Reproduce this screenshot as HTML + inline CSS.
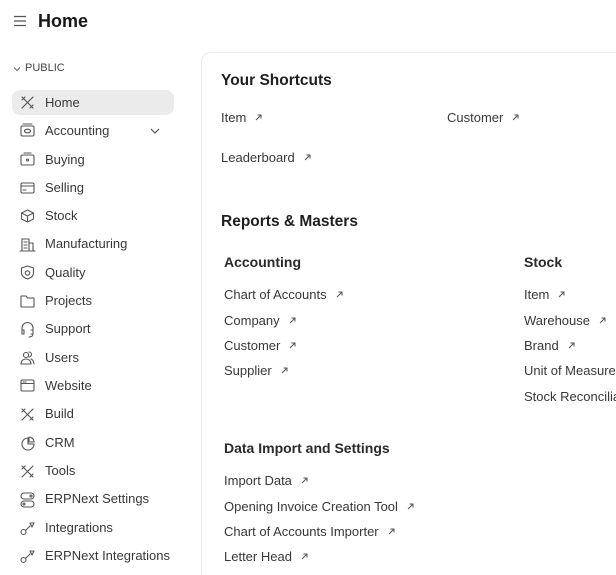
<!DOCTYPE html>
<html style="height:575px;overflow:hidden"><head><meta charset="utf-8"><style>
*{margin:0;padding:0;box-sizing:border-box}
body{width:616px;height:575px;overflow:hidden;background:#fff;font-family:"Liberation Sans",sans-serif;color:#383838;position:relative}
.a{position:absolute;white-space:nowrap}
.t{font-size:13px;line-height:16px}
.h{font-weight:bold;color:#1f1f1f}
.ar{display:inline-block;width:7px;height:7px;margin-left:9px;vertical-align:1px}
</style></head><body>
<svg class="a" style="left:13px;top:14px" width="14" height="14" viewBox="0 0 14 14" stroke="#555" stroke-width="1.2"><path d="M1 2.5h12M1 7h12M1 11.5h12"/></svg>
<div class="a h" style="left:38px;top:10px;font-size:18px;line-height:22px;color:#171717">Home</div>
<svg class="a" style="left:13px;top:66px" width="8" height="6" viewBox="0 0 8 6" fill="none" stroke="#666"><path d="M1 1.5l3 3 3-3"/></svg>
<div class="a" style="left:25px;top:62px;font-size:11px;line-height:13px;color:#444">PUBLIC</div>
<div class="a" style="left:12px;top:90px;width:162px;height:25px;background:#ebebeb;border-radius:8px"></div>
<svg class="a" style="left:149px;top:127px" width="12" height="8" viewBox="0 0 12 8" fill="none" stroke="#555" stroke-width="1.2"><path d="M2 2l4 4 4-4"/></svg>

<div class="a t" style="left:45px;top:95px">Home</div>
<div class="a t" style="left:45px;top:123px">Accounting</div>
<div class="a t" style="left:45px;top:152px">Buying</div>
<div class="a t" style="left:45px;top:180px">Selling</div>
<div class="a t" style="left:45px;top:208px">Stock</div>
<div class="a t" style="left:45px;top:236px">Manufacturing</div>
<div class="a t" style="left:45px;top:265px">Quality</div>
<div class="a t" style="left:45px;top:293px">Projects</div>
<div class="a t" style="left:45px;top:321px">Support</div>
<div class="a t" style="left:45px;top:350px">Users</div>
<div class="a t" style="left:45px;top:378px">Website</div>
<div class="a t" style="left:45px;top:406px">Build</div>
<div class="a t" style="left:45px;top:435px">CRM</div>
<div class="a t" style="left:45px;top:463px">Tools</div>
<div class="a t" style="left:45px;top:491px">ERPNext Settings</div>
<div class="a t" style="left:45px;top:520px">Integrations</div>
<div class="a t" style="left:45px;top:548px">ERPNext Integrations</div>

<svg class="a" style="left:0;top:0" width="40" height="575" fill="none" stroke="#555" stroke-width="1.1" stroke-linecap="round" stroke-linejoin="round">
<path d="M22 97l11 11M33 97l-11 11M22 100l3-3M30 108l3-3"/>
<rect x="21" y="126" width="13" height="10" rx="1.5"/><path d="M23 124h9"/><ellipse cx="27.5" cy="131" rx="3" ry="1.8"/>
<rect x="21" y="155" width="13" height="10" rx="1.5"/><path d="M24 153h7"/><circle cx="27.5" cy="160" r="1"/>
<rect x="21" y="183" width="13" height="10" rx="1.5"/><path d="M21 186h13M23 190h3"/>
<path d="M27.5 210l6 3v6l-6 3-6-3v-6zM21.5 213l6 3 6-3M27.5 216v6"/>
<path d="M22 251v-12h7v12M29 243h4v8M20 251h15M24 242h1M26 242h1M24 245h1M26 245h1M24 248h1M26 248h1"/>
<path d="M27.5 266l6 2v5c0 3-3 5-6 6-3-1-6-3-6-6v-5z"/><circle cx="27.5" cy="273" r="2.2"/>
<path d="M21 296h5l1.5 2H34v9H21z"/>
<path d="M22 330v-2a5.5 5.5 0 0 1 11 0v2M22 330h2v4h-2zM31 330h2v4h-2M33 334c0 2-2 3-4 3"/>
<circle cx="26" cy="355" r="2.5"/><path d="M21 364c0-3 2-5 5-5s5 2 5 5zM29 352a2.5 2.5 0 0 1 0 5M31 359c2 1 3 3 3 5"/>
<rect x="21" y="380" width="13" height="11" rx="1.5"/><path d="M21 383.5h13M23 382h1M25 382h1"/>
<path d="M22 409l11 11M33 409l-11 11M22 412l3-3M30 420l3-3"/>
<path d="M28 438a6 6 0 1 0 6 6h-6zM29 437v5h5a5 5 0 0 0-5-5z"/>
<path d="M22 466l11 11M33 466l-11 11M22 469l3-3M30 477l3-3"/>
<rect x="21" y="493" width="13" height="6" rx="3"/><rect x="21" y="501" width="13" height="6" rx="3"/><circle cx="31" cy="496" r="1"/><circle cx="24" cy="504" r="1"/>
<circle cx="23.5" cy="532" r="2.5"/><path d="M26 530l4-4M30 523l4 0-2 4z"/>
<circle cx="23.5" cy="560" r="2.5"/><path d="M26 558l4-4M30 551l4 0-2 4z"/>
</svg>

<div class="a" style="left:201px;top:52px;width:430px;height:540px;border:1px solid #ececec;border-radius:10px"></div>
<div class="a h" style="left:221px;top:72px;font-size:15.5px;line-height:18px">Your Shortcuts</div>
<div class="a t" style="left:221px;top:110px">Item<svg class="ar" viewBox="0 0 7 7" fill="none" stroke="#555"><path d="M1 6l5-5M2.5 1H6v3.5"/></svg></div>
<div class="a t" style="left:447px;top:110px">Customer<svg class="ar" viewBox="0 0 7 7" fill="none" stroke="#555"><path d="M1 6l5-5M2.5 1H6v3.5"/></svg></div>
<div class="a t" style="left:221px;top:150px">Leaderboard<svg class="ar" viewBox="0 0 7 7" fill="none" stroke="#555"><path d="M1 6l5-5M2.5 1H6v3.5"/></svg></div>
<div class="a h" style="left:221px;top:213px;font-size:15.5px;line-height:18px">Reports &amp; Masters</div>
<div class="a h" style="left:224px;top:254px;font-size:14px;line-height:17px;color:#2a2a2a">Accounting</div>
<div class="a h" style="left:524px;top:254px;font-size:14px;line-height:17px;color:#2a2a2a">Stock</div>
<div class="a t" style="left:224px;top:287px">Chart of Accounts<svg class="ar" viewBox="0 0 7 7" fill="none" stroke="#555"><path d="M1 6l5-5M2.5 1H6v3.5"/></svg></div>
<div class="a t" style="left:224px;top:313px">Company<svg class="ar" viewBox="0 0 7 7" fill="none" stroke="#555"><path d="M1 6l5-5M2.5 1H6v3.5"/></svg></div>
<div class="a t" style="left:224px;top:338px">Customer<svg class="ar" viewBox="0 0 7 7" fill="none" stroke="#555"><path d="M1 6l5-5M2.5 1H6v3.5"/></svg></div>
<div class="a t" style="left:224px;top:363px">Supplier<svg class="ar" viewBox="0 0 7 7" fill="none" stroke="#555"><path d="M1 6l5-5M2.5 1H6v3.5"/></svg></div>
<div class="a t" style="left:524px;top:287px">Item<svg class="ar" viewBox="0 0 7 7" fill="none" stroke="#555"><path d="M1 6l5-5M2.5 1H6v3.5"/></svg></div>
<div class="a t" style="left:524px;top:313px">Warehouse<svg class="ar" viewBox="0 0 7 7" fill="none" stroke="#555"><path d="M1 6l5-5M2.5 1H6v3.5"/></svg></div>
<div class="a t" style="left:524px;top:338px">Brand<svg class="ar" viewBox="0 0 7 7" fill="none" stroke="#555"><path d="M1 6l5-5M2.5 1H6v3.5"/></svg></div>
<div class="a t" style="left:524px;top:363px">Unit of Measure</div>
<div class="a t" style="left:524px;top:389px">Stock Reconciliation</div>
<div class="a h" style="left:224px;top:440px;font-size:14px;line-height:17px;color:#2a2a2a">Data Import and Settings</div>
<div class="a t" style="left:224px;top:473px">Import Data<svg class="ar" viewBox="0 0 7 7" fill="none" stroke="#555"><path d="M1 6l5-5M2.5 1H6v3.5"/></svg></div>
<div class="a t" style="left:224px;top:499px">Opening Invoice Creation Tool<svg class="ar" viewBox="0 0 7 7" fill="none" stroke="#555"><path d="M1 6l5-5M2.5 1H6v3.5"/></svg></div>
<div class="a t" style="left:224px;top:524px">Chart of Accounts Importer<svg class="ar" viewBox="0 0 7 7" fill="none" stroke="#555"><path d="M1 6l5-5M2.5 1H6v3.5"/></svg></div>
<div class="a t" style="left:224px;top:549px">Letter Head<svg class="ar" viewBox="0 0 7 7" fill="none" stroke="#555"><path d="M1 6l5-5M2.5 1H6v3.5"/></svg></div>
</body></html>
